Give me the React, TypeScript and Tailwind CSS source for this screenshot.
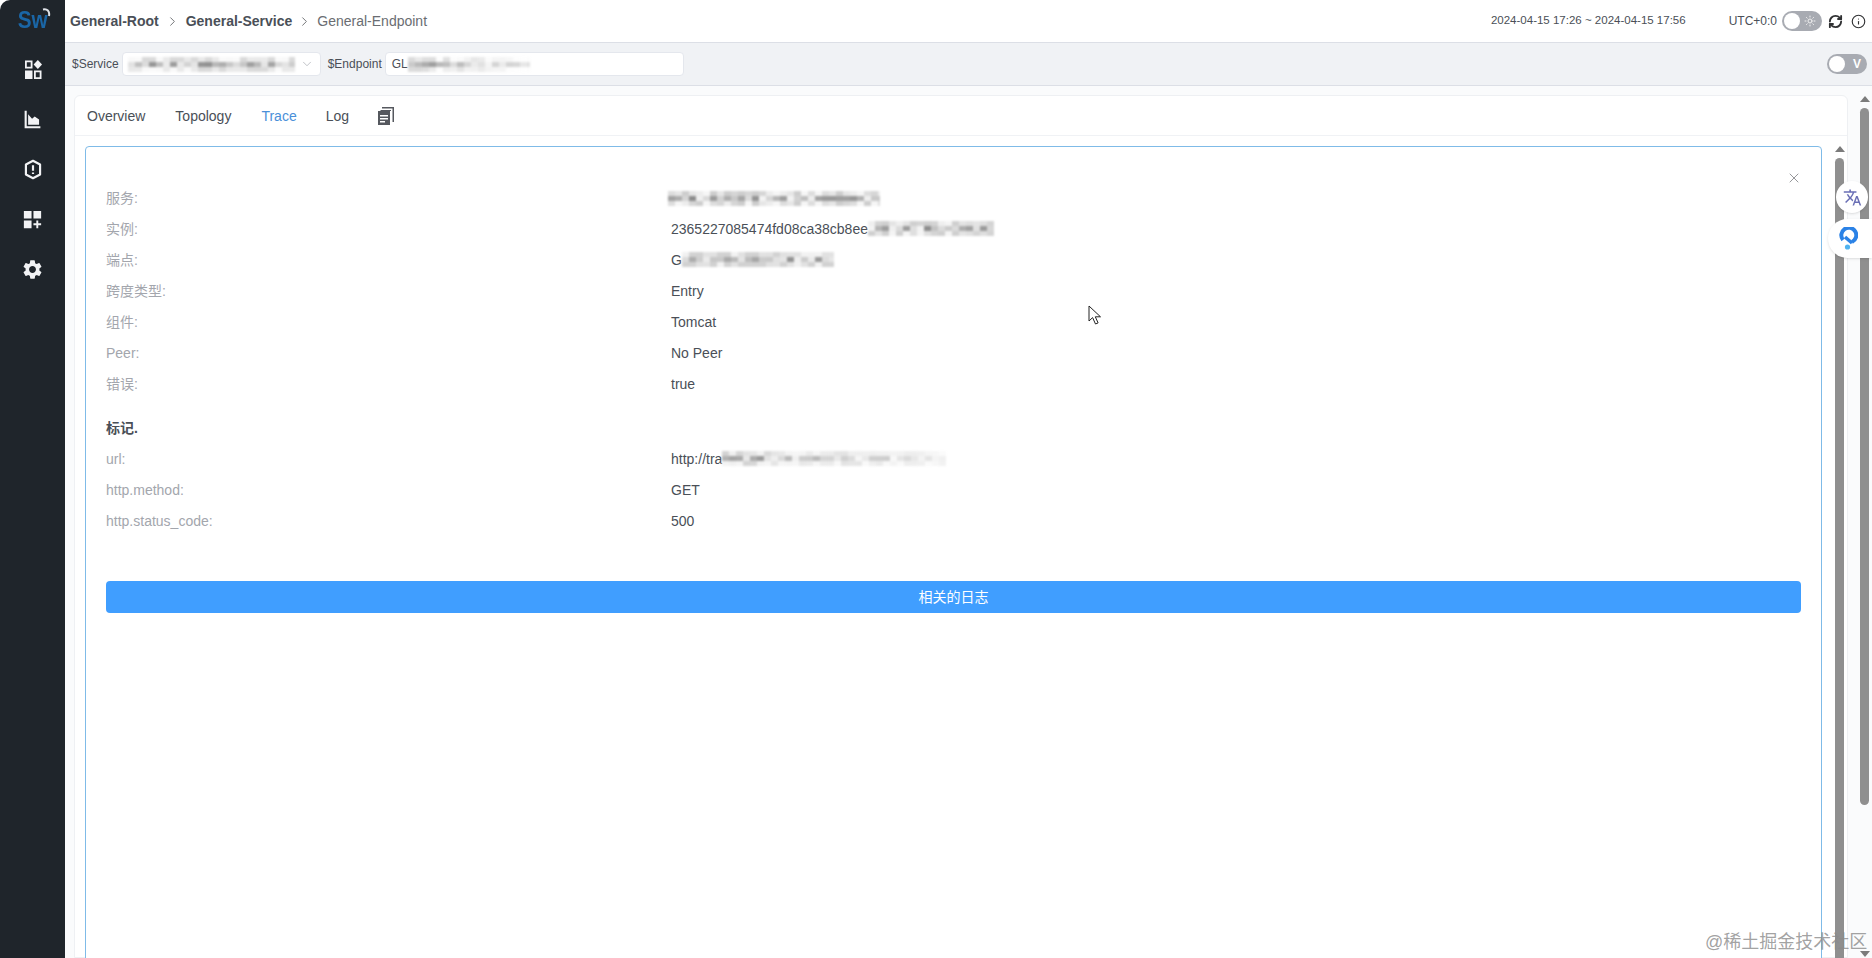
import { ChevronDown, ChevronRight, Info, RefreshCw, Sun, X } from "lucide-react";
import { MdDashboardCustomize, MdSettings, MdTranslate } from "react-icons/md";

const FONT = "font-['Liberation_Sans','Noto_Sans_CJK_SC',sans-serif]";

// pixelated smudge for the redacted values
function Mosaic({ w, h = 15, seed = 1, fade = false }: { w: number; h?: number; seed?: number; fade?: boolean }) {
    const cell = 7;
    const cells = [];
    let s = seed * 7919;
    for (let x = 0; x < w; x += cell) {
        for (let y = 0; y < h; y += 5) {
            s = (s * 1103 + 12345) % 65536;
            const middle = y === 5;
            const shade = middle ? 140 + (s % 105) : 205 + (s % 48);
            const alpha = fade ? 1 - (x / w) * 0.75 : 1;
            cells.push(
                <rect
                    key={`${x}-${y}`}
                    x={x}
                    y={y}
                    width={cell}
                    height={5}
                    fill={`rgb(${shade},${shade},${shade})`}
                    opacity={alpha}
                />
            );
        }
    }
    return (
        <svg width={w} height={h} className="inline-block align-middle blur-[1.2px] shrink-0">
            {cells}
        </svg>
    );
}

function Row({ label, children }: { label: string; children: React.ReactNode }) {
    return (
        <div className="flex h-[31px] items-center text-sm">
            <div className="w-[565px] shrink-0 text-[#a3a6ad]">{label}</div>
            <div className="flex items-center text-[#4a4f57]">{children}</div>
        </div>
    );
}

function Toggle({ children }: { children: React.ReactNode }) {
    return (
        <div className="flex h-5 w-10 items-center justify-between rounded-full bg-[#a8abb2] pl-[2px] pr-[6px]">
            <span className="h-4 w-4 rounded-full bg-white" />
            {children}
        </div>
    );
}

function ScrollTrack({ thumbClass }: { thumbClass: string }) {
    return (
        <div className="flex w-[9px] shrink-0 flex-col items-center">
            <div className="h-0 w-0 border-x-[5px] border-b-[6px] border-x-transparent border-b-[#7b7b7b]" />
            <div className={`mt-[6px] w-[9px] rounded-full bg-[#8f8f8f] ${thumbClass}`} />
        </div>
    );
}

function Sidebar() {
    return (
        <aside className="flex h-full w-[65px] shrink-0 flex-col items-center rounded-tl-[10px] bg-[#1f252b] text-[#f2f3f5]">
            <div className="relative mt-[4px] flex h-[32px] items-center text-[23px] font-bold text-[#1a66a6]">
                <span className="scale-x-90">Sw</span>
                <svg width="10" height="10" viewBox="0 0 10 10" className="absolute -right-[3px] top-[4px]">
                    <path d="M1 1.5 C5 0.5 8 3 7 8" fill="none" stroke="#dfe3e8" strokeWidth="2" />
                </svg>
            </div>
            <div className="mt-[21px] flex flex-col items-center gap-[25px]">
                <svg width="24" height="25" viewBox="0 0 24 24" fill="currentColor">
                    <path d="M4 3h7.5v8H4zm1.8 1.8v4.4h3.9V4.8z" fillRule="evenodd" />
                    <path d="M16.8 2.5 21 7l-4.2 4.5L12.6 7z" />
                    <path d="M4 13h7.5v8.5H4z" />
                    <path d="M13 13h7.5v8.5H13zm1.8 1.8v4.9h3.9v-4.9z" fillRule="evenodd" />
                </svg>
                <svg width="21" height="25" viewBox="0 0 24 24" fill="currentColor">
                    <path d="M3 2h2.4v17.6H21V22H3z" />
                    <path d="M7 18V6l4.5 5 3-2.5 5 3.5v6z" />
                </svg>
                <svg width="20" height="25" viewBox="0 0 24 24" fill="none" stroke="currentColor" strokeWidth="2.6">
                    <path d="M12 1.5 20.5 6v12L12 22.5 3.5 18V6z" strokeLinejoin="round" />
                    <path d="M12 7v6.5M12 15.5v2" />
                </svg>
                <MdDashboardCustomize size={23} className="h-[25px]" />
                <MdSettings size={23} className="h-[25px]" />
            </div>
        </aside>
    );
}

function Header() {
    return (
        <header className="flex h-[43px] shrink-0 items-center border-b border-[#dcdfe6] bg-white pl-[5px] pr-[6px] text-[#4a4f57]">
            <span className="text-sm font-bold">General-Root</span>
            <ChevronRight size={15} strokeWidth={1.4} className="mx-[6px] text-[#606266]" />
            <span className="text-sm font-bold">General-Service</span>
            <ChevronRight size={15} strokeWidth={1.4} className="mx-[5px] text-[#606266]" />
            <span className="text-sm text-[#6a6d72]">General-Endpoint</span>
            <span className="ml-auto text-[11.5px]">2024-04-15 17:26 ~ 2024-04-15 17:56</span>
            <span className="ml-[43px] mr-[5px] text-xs">UTC+0:0</span>
            <Toggle>
                <Sun size={12} className="text-[#f0f0f0]" />
            </Toggle>
            <RefreshCw size={15} strokeWidth={3} className="ml-[6px] text-[#303133]" />
            <Info size={15} strokeWidth={1.8} className="ml-[8px] text-[#303133]" />
        </header>
    );
}

function Toolbar() {
    return (
        <div className="flex h-[43px] shrink-0 items-center border-b border-[#dcdfe6] bg-[#f0f2f5] pl-[7px] pr-[5px] text-xs text-[#4a4f57]">
            <span>$Service</span>
            <div className="ml-[3px] flex h-[24px] w-[199px] items-center justify-between rounded border border-[#e4e7ed] bg-white pl-[5px] pr-[6px]">
                <Mosaic w={167} seed={3} />
                <ChevronDown size={14} strokeWidth={1.2} className="text-[#a8abb2]" />
            </div>
            <span className="ml-[7px]">$Endpoint</span>
            <div className="ml-[3px] flex h-[24px] w-[299px] items-center rounded border border-[#e4e7ed] bg-white pl-[6px]">
                <span>GL</span>
                <Mosaic w={122} seed={5} fade />
            </div>
            <div className="ml-auto">
                <Toggle>
                    <span className="text-xs font-bold text-white">V</span>
                </Toggle>
            </div>
        </div>
    );
}

function Tabs() {
    return (
        <div className="flex h-[40px] shrink-0 items-center border-b border-[#f0f2f5] pl-[12px] text-sm text-[#4a4f57]">
            <span>Overview</span>
            <span className="ml-[30px]">Topology</span>
            <span className="ml-[30px] text-[#4a90d9]">Trace</span>
            <span className="ml-[29px]">Log</span>
            <svg width="18" height="20" viewBox="0 0 18 20" className="ml-[28px]" fill="#55585e">
                <path d="M5 1h12v15h-1.5V2.5H5z" />
                <path d="M3 3.5h11V18H3z" fill="#fff" />
                <path d="M3.5 4h10.5v1H3.5z" />
                <path d="M1 5h12v14H1zm2 4v1.4h8V9zm0 3v1.4h8V12zm0 3v1.4h5V15z" fillRule="evenodd" />
            </svg>
        </div>
    );
}

function Detail() {
    return (
        <div className="relative ml-[10px] mt-[10px] h-[900px] w-[1737px] shrink-0 rounded-t border border-[#7fbbe8] bg-white pl-[20px] pr-[20px] pt-[35px]">
            <X size={16} strokeWidth={1} className="absolute right-[19px] top-[23px] text-[#606266]" />
            <Row label="服务:">
                <div className="-ml-[3px]">
                    <Mosaic w={212} seed={7} />
                </div>
            </Row>
            <Row label="实例:">
                <span>2365227085474fd08ca38cb8ee</span>
                <Mosaic w={126} seed={9} />
            </Row>
            <Row label="端点:">
                <span>G</span>
                <Mosaic w={152} seed={11} />
            </Row>
            <Row label="跨度类型:">Entry</Row>
            <Row label="组件:">Tomcat</Row>
            <Row label="Peer:">No Peer</Row>
            <Row label="错误:">true</Row>
            <div className="mt-[13px] flex h-[31px] items-center text-sm font-bold text-[#4a4f57]">标记.</div>
            <Row label="url:">
                <span>http://tra</span>
                <Mosaic w={224} seed={13} fade />
            </Row>
            <Row label="http.method:">GET</Row>
            <Row label="http.status_code:">500</Row>
            <button className="mt-[45px] flex h-[32px] w-full items-center justify-center rounded-[4px] bg-[#409eff] text-sm text-white">
                相关的日志
            </button>
        </div>
    );
}

export default function App() {
    return (
        <div className={`relative flex h-screen overflow-hidden bg-white ${FONT}`}>
            <Sidebar />
            <main className="flex h-full min-w-0 flex-1 flex-col">
                <Header />
                <Toolbar />
                <div className="flex min-h-0 flex-1 bg-[#fafbfc] pl-[9px] pt-[9px]">
                    {/* card */}
                    <section className="flex h-full w-[1774px] shrink-0 flex-col rounded-t-md border border-[#eef0f3] bg-white">
                        <Tabs />
                        <div className="flex min-h-0 flex-1">
                            <Detail />
                            <div className="ml-[13px] pt-[10px]">
                                <ScrollTrack thumbClass="h-[900px]" />
                            </div>
                        </div>
                    </section>
                    <div className="ml-[12px] flex h-[862px] flex-col pt-[1px]">
                        <ScrollTrack thumbClass="h-[697px]" />
                        <div className="mt-auto ml-0 h-0 w-0 border-x-[5px] border-t-[6px] border-x-transparent border-t-[#7b7b7b]" />
                    </div>
                </div>
            </main>

            {/* floating extension buttons */}
            <div className="absolute left-[1836px] top-[181px] flex h-8 w-8 items-center justify-center rounded-full bg-white shadow-sm">
                <MdTranslate size={19} className="text-[#6a6fb5]" />
            </div>
            <div className="absolute left-[1828px] top-[219px] flex h-[39px] w-[44px] items-center rounded-l-full bg-white pl-[10px] shadow-sm">
                <svg width="20" height="24" viewBox="0 0 20 24" fill="none">
                    <path d="M14 15 A7.5 7.5 0 1 0 5 13" stroke="#2b82e6" strokeWidth="4" />
                    <path d="M7 10 L14 16" stroke="#2b82e6" strokeWidth="3.5" />
                    <circle cx="9.5" cy="20" r="2.6" fill="#4fb3f0" />
                </svg>
            </div>

            {/* mouse pointer */}
            <svg width="14" height="22" viewBox="0 0 14 22" className="absolute left-[1088px] top-[305px]">
                <path d="M1 1v15l3.6-3.4L7.5 19l2.6-1.1-2.8-6.1H12.5z" fill="#fff" stroke="#222" strokeWidth="1" />
            </svg>

            {/* watermark */}
            <div className="absolute left-[1705px] top-[928px] text-lg whitespace-nowrap text-[#8a8a8a]/80">
                @稀土掘金技术社区
            </div>
        </div>
    );
}
